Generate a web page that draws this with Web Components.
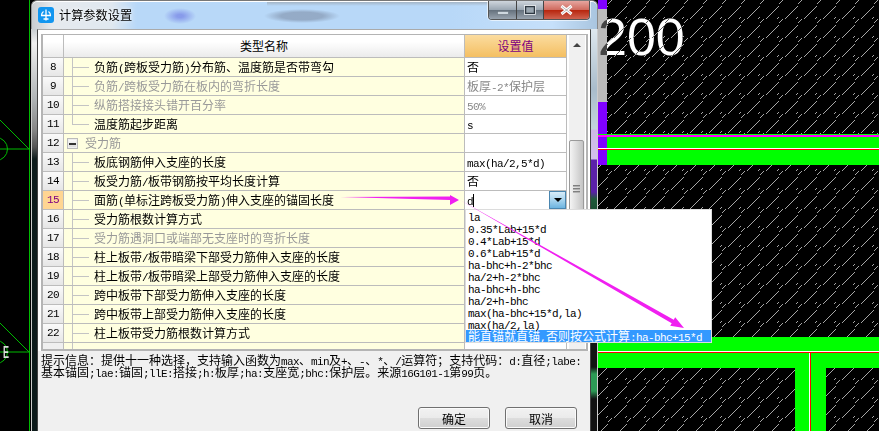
<!DOCTYPE html>
<html lang="zh">
<head>
<meta charset="utf-8">
<title>计算参数设置</title>
<style>
  html, body { margin: 0; padding: 0; background: #000; }
  body { position: relative; width: 879px; height: 431px; overflow: hidden; font: 12px "Noto Sans CJK SC", sans-serif; }
</style>
</head>
<body>
<cad-canvas></cad-canvas>

<calc-dialog>
  <span slot="title">计算参数设置</span>
  <param-grid>
    <param-row num="8" name="负筋(跨板受力筋)分布筋、温度筋是否带弯勾" value="否"></param-row>
    <param-row num="9" name="负筋/跨板受力筋在板内的弯折长度" value="板厚-2*保护层" dim></param-row>
    <param-row num="10" name="纵筋搭接接头错开百分率" value="50%" dim></param-row>
    <param-row num="11" name="温度筋起步距离" value="s" last></param-row>
    <param-row num="12" name="受力筋" group></param-row>
    <param-row num="13" name="板底钢筋伸入支座的长度" value="max(ha/2,5*d)"></param-row>
    <param-row num="14" name="板受力筋/板带钢筋按平均长度计算" value="否"></param-row>
    <param-row num="15" name="面筋(单标注跨板受力筋)伸入支座的锚固长度" value="d" active></param-row>
    <param-row num="16" name="受力筋根数计算方式"></param-row>
    <param-row num="17" name="受力筋遇洞口或端部无支座时的弯折长度" dim></param-row>
    <param-row num="18" name="柱上板带/板带暗梁下部受力筋伸入支座的长度"></param-row>
    <param-row num="19" name="柱上板带/板带暗梁上部受力筋伸入支座的长度"></param-row>
    <param-row num="20" name="跨中板带下部受力筋伸入支座的长度"></param-row>
    <param-row num="21" name="跨中板带上部受力筋伸入支座的长度"></param-row>
    <param-row num="22" name="柱上板带受力筋根数计算方式"></param-row>
  </param-grid>
  <hint-text slot="info" line1="提示信息：提供十一种选择，支持输入函数为max、min及+、-、*、/运算符；支持代码：d:直径;labe:" line2="基本锚固;lae:锚固;llE:搭接;h:板厚;ha:支座宽;bhc:保护层。来源16G101-1第99页。"></hint-text>
  <dialog-button slot="footer">确定</dialog-button>
  <dialog-button slot="footer">取消</dialog-button>
</calc-dialog>

<combo-list>
  <combo-item text="la"></combo-item>
  <combo-item text="0.35*Lab+15*d"></combo-item>
  <combo-item text="0.4*Lab+15*d"></combo-item>
  <combo-item text="0.6*Lab+15*d"></combo-item>
  <combo-item text="ha-bhc+h-2*bhc"></combo-item>
  <combo-item text="ha/2+h-2*bhc"></combo-item>
  <combo-item text="ha-bhc+h-bhc"></combo-item>
  <combo-item text="ha/2+h-bhc"></combo-item>
  <combo-item text="max(ha-bhc+15*d,la)"></combo-item>
  <combo-item text="max(ha/2,la)"></combo-item>
  <combo-item text="能直锚就直锚,否则按公式计算:ha-bhc+15*d" selected></combo-item>
</combo-list>

<arrow-layer></arrow-layer>

<script>
  // SimSun has half width latin, so ascii runs get a mono font 6px wide
  const mixed = (s) => (s || '').replace(/[\x21-\x7e]+/g, (m) => `<span class="m">${m}</span>`);
  const MONO = `.m { font-family: "Liberation Mono", monospace; font-size: 11px; letter-spacing: -0.6px; }`;

  class CadCanvas extends HTMLElement {
    constructor() {
      super();
      this.shadowDOM = this.attachShadow({mode: 'open'});
    }

    connectedCallback() {
      this.render();
    }

    render() {
      this.shadowDOM.innerHTML = `
        <style>
          :host { position: absolute; left: 0; top: 0; width: 879px; height: 431px; display: block; background: #000; }
          svg { display: block; }
          .num { font: 52px "Liberation Sans", sans-serif; fill: #fff; mix-blend-mode: difference; }
          .tag { font: bold 16px "Liberation Sans", sans-serif; fill: #ddd; }
        </style>
        <svg width="879" height="431" viewBox="0 0 879 431">
          <defs>
            <pattern id="hatch" width="19" height="19" patternUnits="userSpaceOnUse">
              <path d="M-2 6L6 -2M0 25L25 0M15 21L21 15" stroke="#d0d0d0" stroke-width=".8" fill="none"/>
            </pattern>
          </defs>
          <rect x="598" y="0" width="281" height="431" fill="url(#hatch)"/>
          <rect x="598" y="0" width="9" height="165" fill="#8000ff"/>
          <rect x="598" y="9" width="9" height="93" fill="#bbb"/>
          <rect x="607" y="134" width="272" height="31" fill="#0f0"/>
          <rect x="598" y="134" width="281" height="1" fill="#0f0"/>
          <rect x="598" y="135" width="281" height="2" fill="#f0f"/>
          <rect x="598" y="148" width="281" height="1" fill="#fff"/>
          <rect x="598" y="149" width="281" height="1" fill="#f00"/>
          <rect x="598" y="337" width="281" height="31" fill="#0f0"/>
          <rect x="795" y="368" width="31" height="63" fill="#0f0"/>
          <rect x="598" y="351" width="281" height="1" fill="#fff"/>
          <rect x="598" y="352" width="281" height="1" fill="#f00"/>
          <rect x="809" y="353" width="1" height="78" fill="#fff"/>
          <rect x="810" y="353" width="1" height="78" fill="#f00"/>
          <text class="num" x="598" y="55">200</text>
          <g stroke="#0b0" fill="none">
            <path d="M29.500 0V431"/>
            <path d="M0 120L29 149H0"/>
            <circle cx="-4" cy="149" r="11.500"/>
            <path d="M0 323L29 352H0"/>
            <circle cx="-4" cy="352" r="11.500"/>
          </g>
          <text class="tag" x="3" y="358" textLength="6" lengthAdjust="spacingAndGlyphs">E</text>
        </svg>
      `;
    }
  }

  class CalcDialog extends HTMLElement {
    constructor() {
      super();
      this.shadowDOM = this.attachShadow({mode: 'open'});
    }

    connectedCallback() {
      this.render();
    }

    render() {
      this.shadowDOM.innerHTML = `
        <style>
          * { box-sizing: border-box; }
          :host {
            position: absolute; left: 31px; top: 0; width: 567px; height: 431px;
            display: grid; grid-template-columns: 6px 554px 7px; grid-template-rows: 29px 402px;
            color: #000;
          }
          .title {
            grid-column: 1 / 4; position: relative; display: flex; align-items: center; gap: 5px;
            padding: 0 0 1px 6px; border-radius: 6px 6px 0 0; overflow: hidden;
            border-top: 1px solid #777; border-left: 1px solid #999; border-right: 1px solid #888;
            box-shadow: inset 0 1px 0 #fff;
            background:
              linear-gradient(rgba(120,105,90,.4), transparent 5px) 235px 0 / 240px 6px no-repeat,
              radial-gradient(ellipse 16px 8px at 148px 15px, rgba(120,135,230,.75) 20%, transparent),
              radial-gradient(ellipse 38px 7px at 270px 15px, rgba(125,141,166,.6) 55%, transparent),
              linear-gradient(90deg, #c9ccd0 0, #e6eaee 20px, #dfe8f0 80px, #b8d8f8 105px, #b8d8f8 420px, #c6e0fa 520px, #a8c4de 567px);
          }
          .title svg { display: block; }
          .title ::slotted(span) { font-size: 12.2px; line-height: 16px; text-shadow: 0 0 4px #fff; }
          .caption { position: absolute; top: 0; right: 7px; display: flex; height: 19px; border: 1px solid #555; border-top: 0; border-radius: 0 0 4px 4px; overflow: hidden; box-shadow: 0 0 0 1px rgba(255,255,255,.6); }
          .caption div { display: flex; align-items: center; justify-content: center; height: 18px; border-right: 1px solid #444; background: linear-gradient(#cfd6dd, #9ba7b3 48%, #66727e 52%, #98a3ae); }
          .caption .min { width: 28px; padding-top: 5px; }
          .caption .max { width: 27px; }
          .caption .close { width: 45px; border-right: 0; background: linear-gradient(#e6a6a0, #cf6b5f 48%, #b8260e 52%, #cf6350); }
          .glass-l { border-left: 1px solid #ccc; background: linear-gradient(#c8cdd0, #f0f0f0 14px, #b0b4b6 70px, #888 100px, #555 118px, #0e1c1c 130px, #0c1a1a); }
          .glass-r { border-right: 1px solid #ccc; background: linear-gradient(#dfe8ee, #a9bccb 60px, #c3d4dd 100px, #cdb8e6 101px, #d2c0ec 130px, #5c22aa 131px, #5a20a8 163px, #1f5a3a 170px, #14301f 210px, #111 338px, #2c9a55 345px, #2c9a55 362px, #111 370px, #111); }
          .client {
            display: flex; flex-direction: column; min-height: 0;
            border: 1px solid #444; border-top: 1px solid #aaa; border-bottom: 0;
            background: #f0f0f0;
          }
          .top { height: 4px; background: #fff; }
          .grid-wrap { padding: 0 2px 0 3px; background: #fff; }
          .info { padding: 3px 0 0 3px; flex: 1; }
          .footer { display: flex; justify-content: flex-end; gap: 15px; padding: 0 13px 2px 0; }
        </style>
        <div class="title">
          <svg width="16" height="16" viewBox="0 0 16 16">
            <rect width="16" height="16" rx="3" fill="#1296f0"/>
            <path d="M8 2.500V13.500M3 8.500H13M5.500 4.500C4 5.500 3.500 7 3.500 8.500M10.500 4.500C12 5.500 12.500 7 12.500 8.500M5.500 12H10.500" stroke="#fff" stroke-width="1.300" fill="none"/>
          </svg>
          <slot name="title"></slot>
          <div class="caption">
            <div class="min"><svg width="12" height="4"><rect x=".5" y=".5" width="11" height="3" fill="#cfd8df" stroke="#66727c" stroke-width=".6"/></svg></div>
            <div class="max"><svg width="12" height="10"><rect x="1.500" y="1.500" width="9" height="7" fill="#9aa6b0" stroke="#2e3842" stroke-width="1.500"/><rect x=".5" y=".5" width="11" height="9" fill="none" stroke="#eef2f5" stroke-width=".8"/></svg></div>
            <div class="close"><svg width="15" height="12" viewBox="0 0 15 12"><path d="M2.500 2L12.500 10M12.500 2L2.500 10" stroke="#fff" stroke-width="3"/><path d="M3 2.500L12 9.500M12 2.500L3 9.500" stroke="#777" stroke-width=".5"/></svg></div>
          </div>
        </div>
        <div class="glass-l"></div>
        <div class="client">
          <div class="top"></div>
          <div class="grid-wrap"><slot></slot></div>
          <div class="info"><slot name="info"></slot></div>
          <div class="footer"><slot name="footer"></slot></div>
        </div>
        <div class="glass-r"></div>
      `;
    }
  }

  class ParamGrid extends HTMLElement {
    constructor() {
      super();
      this.shadowDOM = this.attachShadow({mode: 'open'});
    }

    connectedCallback() {
      this.render();
    }

    render() {
      this.shadowDOM.innerHTML = `
        <style>
          * { box-sizing: border-box; }
          :host {
            display: flex; height: 314px; background: #fff; overflow: hidden;
            border: 2px solid #b4b4b4; border-top-width: 1px;
          }
          .table { width: 524px; flex: none; display: flex; flex-direction: column; background: #ffffe0; overflow: hidden; }
          .head { display: grid; grid-template-columns: 21px 401px 102px; height: 23px; flex: none; text-align: center; line-height: 21px; font-size: 12px; }
          .head div { border-right: 1px solid #bcbcbc; border-bottom: 1px solid #bcbcbc; background: linear-gradient(#fff, #fff 30%, #ebebeb); }
          .head .val { color: #800080; background: linear-gradient(#fbdc9f, #f4bf62); }
          .rest { flex: 1; display: grid; grid-template-columns: 21px 401px 102px; }
          .rest div { border-right: 1px solid #bcbcbc; }
          .rest .n { background: #efefef; }
          .rest .t { background: linear-gradient(#c4c4c4, #c4c4c4) 8px 0 / 1px 100% no-repeat #ffffe0; }
          .rest .v { background: #fff; }
          .bar { width: 19px; flex: none; padding: 0 1px 0 2px; display: flex; flex-direction: column; background: #fff; }
          .track { flex: 1; background: #f0f0f0; display: flex; flex-direction: column; }
          .up { width: 0; height: 0; margin: 8px auto 0; border: 4px solid transparent; border-top: 0; border-bottom: 4px solid #444; }
          .spacer { height: 93px; flex: none; }
          .thumb {
            height: 90px; margin-right: 1px; border: 1px solid #9a9a9a; border-radius: 2px 2px 0 0;
            background: linear-gradient(90deg, #f4f4f4, #dcdcdc 50%, #c4c4c4);
            display: flex; flex-direction: column; gap: 1px; padding-top: 44px; align-items: center;
          }
          .thumb i { display: block; width: 7px; height: 2px; background: linear-gradient(#666, #ccc); }
        </style>
        <div class="table">
          <div class="head"><div></div><div>类型名称</div><div class="val">设置值</div></div>
          <slot></slot>
          <div class="rest"><div class="n"></div><div class="t"></div><div class="v"></div></div>
        </div>
        <div class="bar">
          <div class="track">
            <div class="up"></div>
            <div class="spacer"></div>
            <div class="thumb"><i></i><i></i><i></i></div>
          </div>
        </div>
      `;
    }
  }

  class ParamRow extends HTMLElement {
    constructor() {
      super();
      this.shadowDOM = this.attachShadow({mode: 'open'});
    }

    connectedCallback() {
      this.render();
    }

    render() {
      const name = mixed(this.getAttribute('name'));
      const value = mixed(this.getAttribute('value'));
      const group = this.hasAttribute('group');
      const active = this.hasAttribute('active');
      const tree = group
        ? `<span class="box"><i></i></span>`
        : `<span class="tree ${this.hasAttribute('last') ? 'last' : ''}"></span>`;

      this.shadowDOM.innerHTML = `
        <style>
          * { box-sizing: border-box; }
          ${MONO}
          :host {
            display: grid; grid-template-columns: 21px 401px 102px; height: 19px;
            font-size: 12px; line-height: 18px;
          }
          .cell { border-right: 1px solid #bcbcbc; border-bottom: 1px solid #bcbcbc; white-space: nowrap; overflow: hidden; }
          .num { text-align: center; background: linear-gradient(#fafafa, #e6e6e6); font-family: "Liberation Mono", monospace; font-size: 11px; letter-spacing: -0.6px; }
          .num.on { background: #ffd592; color: #800080; }
          .name { display: flex; background: #ffffe0; }
          .tree { width: 22px; height: 18px; margin-left: 8px; flex: none; background: linear-gradient(#c4c4c4, #c4c4c4) 0 0 / 1px 100% no-repeat, linear-gradient(#c4c4c4, #c4c4c4) 1px 9px / 16px 1px no-repeat; }
          .tree.last { background: linear-gradient(#c4c4c4, #c4c4c4) 0 0 / 1px 10px no-repeat, linear-gradient(#c4c4c4, #c4c4c4) 1px 9px / 16px 1px no-repeat; }
          .box { width: 11px; height: 11px; margin: 4px 7px 0 3px; flex: none; border: 1px solid #bbb; background: linear-gradient(#fff, #d8d8d8); display: flex; align-items: center; justify-content: center; box-shadow: inset 0 0 0 1px #eee; }
          .box i { display: block; width: 7px; height: 2px; background: #333; }
          .dim, .group { color: #999; }
          .val { position: relative; background: #fff; padding-left: 2px; }
          .val.dim { color: #888; }
          .caret { display: inline-block; width: 1px; height: 13px; background: #000; vertical-align: -2px; }
          .drop { position: absolute; right: 0; top: 0; width: 17px; height: 18px; border: 1px solid #4a86b0; background: linear-gradient(#d8ecf8, #a8d4ee 50%, #6cb4e0); display: flex; align-items: center; justify-content: center; }
          .drop i { width: 0; height: 0; border: 4px solid transparent; border-bottom: 0; border-top: 4px solid #000; }
        </style>
        <div class="cell num ${active ? 'on' : ''}">${this.getAttribute('num')}</div>
        <div class="cell name">${tree}<span class="${this.hasAttribute('dim') ? 'dim' : ''} ${group ? 'group' : ''}">${name}</span></div>
        <div class="cell val ${this.hasAttribute('dim') ? 'dim' : ''}">${value}${active ? '<span class="caret"></span><span class="drop"><i></i></span>' : ''}</div>
      `;
    }
  }

  class HintText extends HTMLElement {
    constructor() {
      super();
      this.shadowDOM = this.attachShadow({mode: 'open'});
    }

    connectedCallback() {
      this.render();
    }

    render() {
      this.shadowDOM.innerHTML = `
        <style>
          ${MONO}
          :host { display: block; font-size: 12px; line-height: 12px; white-space: nowrap; }
          div { height: 12px; }
        </style>
        <div>${mixed(this.getAttribute('line1'))}</div>
        <div>${mixed(this.getAttribute('line2'))}</div>
      `;
    }
  }

  class DialogButton extends HTMLElement {
    constructor() {
      super();
      this.shadowDOM = this.attachShadow({mode: 'open'});
    }

    connectedCallback() {
      this.render();
    }

    render() {
      this.shadowDOM.innerHTML = `
        <style>
          :host {
            display: flex; align-items: center; justify-content: center; box-sizing: border-box;
            width: 72px; height: 22px; border: 1px solid #707070; border-radius: 3px;
            font-size: 12px; box-shadow: inset 0 0 0 1px #fbfbfb;
            background: linear-gradient(#f2f2f2, #ebebeb 48%, #ddd 52%, #cfcfcf);
          }
        </style>
        <slot></slot>
      `;
    }
  }

  class ComboList extends HTMLElement {
    constructor() {
      super();
      this.shadowDOM = this.attachShadow({mode: 'open'});
    }

    connectedCallback() {
      this.render();
    }

    render() {
      this.shadowDOM.innerHTML = `
        <style>
          :host {
            position: absolute; left: 465px; top: 209px; width: 247px; height: 134px; box-sizing: border-box;
            display: block; background: #fff; border: 1px solid #dcdcdc; overflow: hidden;
          }
        </style>
        <slot></slot>
      `;
    }
  }

  class ComboItem extends HTMLElement {
    constructor() {
      super();
      this.shadowDOM = this.attachShadow({mode: 'open'});
    }

    connectedCallback() {
      this.render();
    }

    render() {
      this.shadowDOM.innerHTML = `
        <style>
          ${MONO}
          :host { display: block; height: 12px; line-height: 12px; padding-left: 2px; font-size: 12px; white-space: nowrap; color: #000; }
          :host([selected]) { background: #3399ff; color: #fff; }
        </style>
        ${mixed(this.getAttribute('text'))}
      `;
    }
  }

  class ArrowLayer extends HTMLElement {
    constructor() {
      super();
      this.shadowDOM = this.attachShadow({mode: 'open'});
    }

    connectedCallback() {
      this.render();
    }

    render() {
      this.shadowDOM.innerHTML = `
        <style>
          :host { position: absolute; left: 0; top: 0; display: block; pointer-events: none; }
          svg { display: block; }
        </style>
        <svg width="879" height="431" viewBox="0 0 879 431">
          <g fill="#f020f0">
            <polygon points="340,197 450,196.500 450,195 459,200 450,205 450,200"/>
            <polygon points="460,200 673.700,319.800 675.200,317.200 684,328 670.200,325.800 671.700,323.200"/>
          </g>
        </svg>
      `;
    }
  }

  customElements.define('cad-canvas', CadCanvas);
  customElements.define('calc-dialog', CalcDialog);
  customElements.define('param-grid', ParamGrid);
  customElements.define('param-row', ParamRow);
  customElements.define('hint-text', HintText);
  customElements.define('dialog-button', DialogButton);
  customElements.define('combo-list', ComboList);
  customElements.define('combo-item', ComboItem);
  customElements.define('arrow-layer', ArrowLayer);
</script>
</body>
</html>
